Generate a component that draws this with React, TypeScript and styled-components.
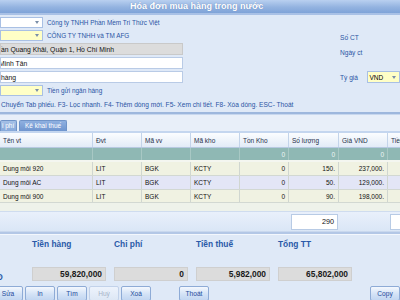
import React from 'react';
import styled, { createGlobalStyle } from 'styled-components';

const Global = createGlobalStyle`
  html, body { margin: 0; padding: 0; }
  body {
    width: 400px; height: 300px; overflow: hidden;
    background: #dfe9f7;
    font-family: "Liberation Sans", Arial, sans-serif;
  }
`;

const Window = styled.div`
  width: 400px; height: 300px; overflow: hidden;
  display: flex; flex-direction: column;
  background: #dfe9f7; color: #1e4a9a; font-size: 7px;
`;

const TitleBar = styled.div`
  flex: 0 0 13px; height: 13px;
  background: linear-gradient(#b9d0f0, #93b3e0 55%, #7fa3d8);
  border-bottom: 2px solid #a9c1e6;
  color: #fff; font-weight: bold; font-size: 9px; line-height: 13px;
  padding-left: 130px; white-space: nowrap;
  text-shadow: 0 0 1px #5d7fb5;
`;

const FormArea = styled.div`
  flex: 0 0 85px; height: 85px; box-sizing: border-box;
  display: flex; padding-top: 2px;
`;

const LeftCol = styled.div`
  width: 183px; display: flex; flex-direction: column; gap: 2px;
`;

const FormRow = styled.div<{ $h: number }>`
  display: flex; align-items: center; gap: 4px; height: ${p => p.$h}px;
`;

const Combo = styled.div<{ $yellow?: boolean; $w?: number }>`
  width: ${p => p.$w ?? 43}px; height: 100%; box-sizing: border-box;
  border: 1px solid #a9c0e4;
  background: ${p => (p.$yellow ? '#ffffc6' : '#ffffff')};
  display: flex; align-items: center; justify-content: space-between;
  padding: 0 3px 0 2px; color: #000; font-size: 6.5px;
`;

const Arrow = styled.svg`
  width: 4px; height: 3px; flex: none;
`;

const FieldLabel = styled.span`
  color: #2a55a4; white-space: nowrap; font-size: 6.4px;
`;

const TextBox = styled.div<{ $gray?: boolean; $indent?: number }>`
  width: 183px; height: 100%; box-sizing: border-box;
  border: 1px solid ${p => (p.$gray ? '#c9c9c9' : '#b9cbe6')};
  background: ${p => (p.$gray ? '#dcdcdc' : '#ffffff')};
  color: #111; white-space: nowrap; overflow: hidden;
  display: flex; align-items: center; font-size: 6.8px;
  text-indent: ${p => p.$indent ?? 0}px;
`;

const RightCol = styled.div`
  margin-left: auto; width: 60px; display: flex; flex-direction: column;
  padding-top: 14px;
`;

const RightRow = styled.div<{ $mt?: number }>`
  display: flex; align-items: center; height: 12px; margin-top: ${p => p.$mt ?? 0}px;
`;

const RightLabel = styled.span`
  width: 33px; color: #2a55a4; white-space: nowrap; font-size: 6.6px;
`;

const Status = styled.div`
  flex: 0 0 12px; height: 12px; line-height: 10px; padding-left: 1px;
  color: #2a55a4; white-space: nowrap; font-size: 6.6px;
`;

const Separator = styled.div`
  flex: 0 0 2px; height: 2px; background: #9db7dd;
  border-bottom: 1px solid #c7d7ee;
`;

const TabStrip = styled.div`
  flex: 0 0 18px; height: 18px; box-sizing: border-box;
  background: #e8eff9; display: flex; align-items: flex-end; gap: 2px;
  border-bottom: 2px solid #c4d6ef;
`;

const Tab = styled.div<{ $w: number; $active?: boolean }>`
  width: ${p => p.$w}px; height: 11px; box-sizing: border-box;
  background: ${p => (p.$active ? 'linear-gradient(#8fb0e0, #6f95cf)' : 'linear-gradient(#a5c0e6, #86a8da)')};
  border: 1px solid #6f93c8; border-bottom: none; border-radius: 2px 2px 0 0;
  color: #fff; font-size: 6.5px; line-height: 10px; padding-left: ${p => (p.$active ? 5 : 1)}px;
  white-space: nowrap; overflow: hidden;
`;

const cols = '93px 49px 49px 49px 49px 50px 49px 20px';

const GridRow = styled.div<{ $h: number; $bg: string; $bb?: string }>`
  display: grid; grid-template-columns: ${cols};
  height: ${p => p.$h}px; flex: 0 0 ${p => p.$h}px; box-sizing: border-box;
  background: ${p => p.$bg};
  border-bottom: ${p => p.$bb ?? 'none'};
`;

const HeadCell = styled.div`
  border-right: 1px solid #c3d4ea; padding-left: 3px;
  display: flex; align-items: center; color: #1f2f4a; font-size: 6.5px;
  white-space: nowrap; overflow: hidden;
`;

const Cell = styled.div<{ $right?: boolean; $color?: string; $line: string }>`
  border-right: 1px solid ${p => p.$line};
  display: flex; align-items: center;
  justify-content: ${p => (p.$right ? 'flex-end' : 'flex-start')};
  padding: ${p => (p.$right ? '0 3px 0 0' : '0 0 0 3px')};
  color: ${p => p.$color ?? '#111'}; font-size: 6.5px;
  white-space: nowrap; overflow: hidden;
`;

const GridEmpty = styled.div`
  flex: 0 0 8px; height: 8px; background: #eef2ea;
`;

const Footer = styled.div`
  flex: 0 0 20px; height: 20px; box-sizing: border-box;
  display: grid; grid-template-columns: ${cols}; align-items: center;
  background: linear-gradient(#e9f0fb, #dae6f6);
  border-top: 1px solid #cfdcef;
`;

const SumBox = styled.div`
  height: 16px; box-sizing: border-box; margin: 0 1px 0 2px;
  background: #fff; border: 1px solid #b8cbe5;
  display: flex; align-items: center; justify-content: flex-end;
  padding-right: 3px; color: #111; font-size: 7.2px;
`;

const Separator2 = styled.div`
  flex: 0 0 2px; height: 2px; background: #b3c7e6;
  border-top: 1px solid #c9d8ee; border-bottom: 1px solid #f3f7fd;
`;

const Totals = styled.div`
  flex: 1; display: flex; flex-direction: column;
  background: #dfe9f7;
`;

const TotalsGrid = styled.div`
  display: grid; grid-template-columns: repeat(4, 74px); column-gap: 8px;
  padding-left: 32px; position: relative;
`;

const TotalLabel = styled.div`
  height: 10px; margin-top: 4px; margin-bottom: 18px;
  font-weight: bold; font-size: 8.4px; color: #2a5aa8; white-space: nowrap;
`;

const TotalValue = styled.div`
  height: 14px; box-sizing: border-box;
  background: #dcdcdc; border: 1px solid #cfcfcf;
  display: flex; align-items: center; justify-content: flex-end;
  padding-right: 3px; font-weight: bold; font-size: 8.4px; color: #1a1a1a;
`;

const CurrencyLabel = styled.div`
  position: absolute; left: -15px; bottom: -1px;
  font-weight: bold; font-size: 8.4px; color: #2a5aa8; white-space: nowrap;
`;

const ButtonBar = styled.div`
  display: flex; gap: 2px; margin-top: 5px; margin-left: -7px; height: 15px;
`;

const Button = styled.div<{ $disabled?: boolean; $ml?: number }>`
  width: 30px; height: 15px; box-sizing: border-box; flex: none;
  margin-left: ${p => p.$ml ?? 0}px;
  border: 1px solid ${p => (p.$disabled ? '#c2d2ea' : '#8eabd6')};
  border-radius: 2px;
  background: ${p => (p.$disabled ? 'linear-gradient(#edf3fc, #dde7f5)' : 'linear-gradient(#f4f8fe, #d3e2f6 55%, #c2d6f1)')};
  color: ${p => (p.$disabled ? '#a6b3c8' : '#1e4a9a')};
  display: flex; align-items: center; justify-content: center;
  font-size: 6.6px;
`;

const DownArrow = () => (
  <Arrow viewBox="0 0 4 3">
    <path d="M0 0 L4 0 L2 3 Z" fill="#7a8ea8" />
  </Arrow>
);

const headers = ['Tên vt', 'Đvt', 'Mã vv', 'Mã kho', 'Tồn Kho', 'Số lượng', 'Giá VND', 'Tiền'];

const rows = [
  { name: 'Dung môi 920', qty: '150.', price: '237,000.', bg: '#f0f2e2', h: 14 },
  { name: 'Dung môi AC', qty: '50.', price: '129,000.', bg: '#e3e6f6', h: 14 },
  { name: 'Dung môi 900', qty: '90.', price: '198,000.', bg: '#f0f2e2', h: 13 },
];

const totals = [
  { label: 'Tiền hàng', value: '59,820,000' },
  { label: 'Chi phí', value: '0' },
  { label: 'Tiền thuế', value: '5,982,000' },
  { label: 'Tổng TT', value: '65,802,000' },
];

export default function App() {
  return (
    <>
      <Global />
      <Window>
        <TitleBar>Hóa đơn mua hàng trong nước</TitleBar>
        <FormArea>
          <LeftCol>
            <FormRow $h={11}>
              <Combo><span /><DownArrow /></Combo>
              <FieldLabel>Công ty TNHH Phần Mềm Trí Thức Việt</FieldLabel>
            </FormRow>
            <FormRow $h={11}>
              <Combo $yellow><span /><DownArrow /></Combo>
              <FieldLabel>CÔNG TY TNHH và TM AFG</FieldLabel>
            </FormRow>
            <FormRow $h={12}>
              <TextBox $gray>ần Quang Khải, Quận 1, Hồ Chí Minh</TextBox>
            </FormRow>
            <FormRow $h={12}>
              <TextBox $indent={-2}>Minh Tân</TextBox>
            </FormRow>
            <FormRow $h={12}>
              <TextBox>hàng</TextBox>
            </FormRow>
            <FormRow $h={11}>
              <Combo $yellow><span /><DownArrow /></Combo>
              <FieldLabel>Tiền gửi ngân hàng</FieldLabel>
            </FormRow>
          </LeftCol>
          <RightCol>
            <RightRow><RightLabel>Số CT</RightLabel></RightRow>
            <RightRow $mt={3}><RightLabel>Ngày ct</RightLabel></RightRow>
            <RightRow $mt={13}>
              <RightLabel>Tỷ giá</RightLabel>
              <Combo $yellow $w={40}>VND<DownArrow /></Combo>
            </RightRow>
          </RightCol>
        </FormArea>
        <Status>Chuyển Tab phiếu. F3- Lọc nhanh. F4- Thêm dòng mới. F5- Xem chi tiết. F8- Xóa dòng. ESC- Thoát</Status>
        <Separator />
        <TabStrip>
          <Tab $w={17}>i phí</Tab>
          <Tab $w={48} $active>Kê khai thuế</Tab>
        </TabStrip>
        <GridRow $h={15} $bg="linear-gradient(#fbfdff, #e2ebf7)" $bb="1px solid #b7c9e1">
          {headers.map(h => <HeadCell key={h}>{h}</HeadCell>)}
        </GridRow>
        <GridRow $h={14} $bg="#8fb8b4" $bb="2px solid #f4f6f0">
          {headers.map((h, i) => (
            <Cell key={h} $line="#a8c8c4" $right $color="#eef6f5">{i >= 4 && i <= 6 ? '0' : ''}</Cell>
          ))}
        </GridRow>
        {rows.map(r => (
          <GridRow key={r.name} $h={r.h} $bg={r.bg} $bb="1px solid #d2d8d2">
            <Cell $line="#d0d6d0">{r.name}</Cell>
            <Cell $line="#d0d6d0">LIT</Cell>
            <Cell $line="#d0d6d0">BGK</Cell>
            <Cell $line="#d0d6d0">KCTY</Cell>
            <Cell $line="#d0d6d0" $right>0</Cell>
            <Cell $line="#d0d6d0" $right>{r.qty}</Cell>
            <Cell $line="#d0d6d0" $right>{r.price}</Cell>
            <Cell $line="#d0d6d0" />
          </GridRow>
        ))}
        <GridEmpty />
        <Footer>
          <span /><span /><span /><span /><span />
          <SumBox>290</SumBox>
          <span />
          <SumBox />
        </Footer>
        <Separator2 />
        <Totals>
          <TotalsGrid>
            {totals.map(t => <TotalLabel key={t.label}>{t.label}</TotalLabel>)}
            {totals.map(t => <TotalValue key={t.label}>{t.value}</TotalValue>)}
            <CurrencyLabel>VNĐ</CurrencyLabel>
          </TotalsGrid>
          <ButtonBar>
            <Button>Sửa</Button>
            <Button>In</Button>
            <Button>Tìm</Button>
            <Button $disabled>Huỷ</Button>
            <Button>Xoá</Button>
            <Button $ml={26}>Thoát</Button>
            <Button $ml={159}>Copy</Button>
          </ButtonBar>
        </Totals>
      </Window>
    </>
  );
}
